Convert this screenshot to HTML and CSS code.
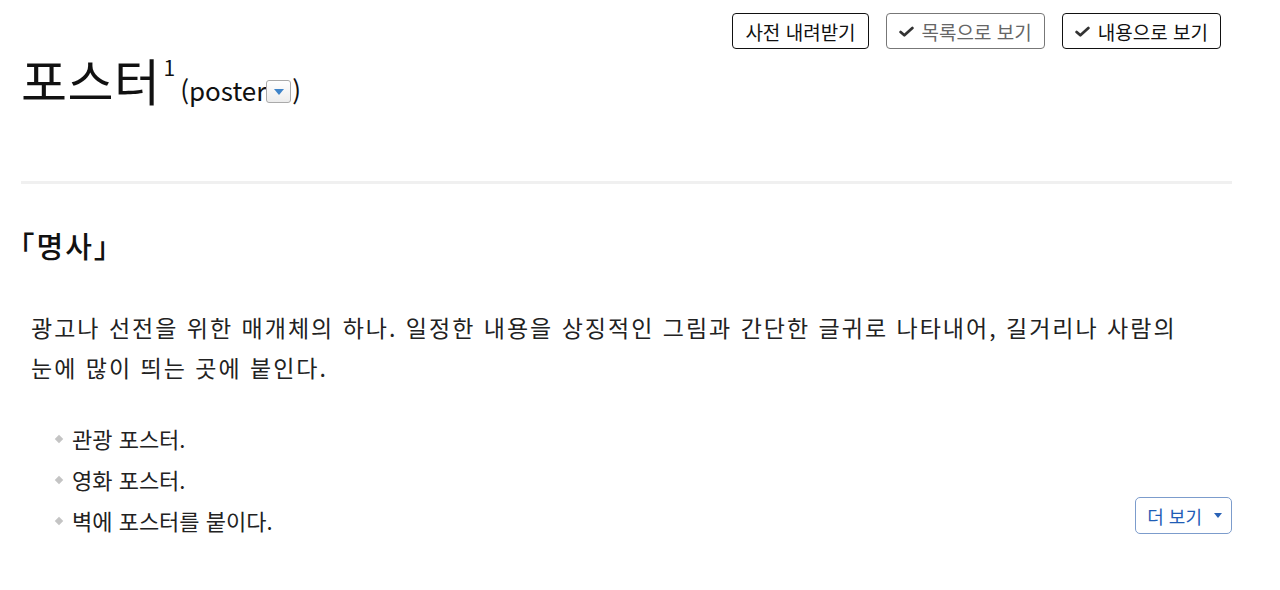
FILE: index.html
```html
<!DOCTYPE html>
<html lang="ko">
<head>
<meta charset="utf-8">
<link rel="stylesheet" href="styles.css">
</head>
<body>
<div class="page">
  <div class="toolbar">
    <button class="btn">사전 내려받기</button>
    <button class="btn btn-muted"><svg class="chk" viewBox="0 0 14 10" width="15" height="11"><path d="M1.5 5.5 L5 8.5 L12.5 1.8" fill="none" stroke="currentColor" stroke-width="2.6" stroke-linecap="round" stroke-linejoin="round"/></svg>목록으로 보기</button>
    <button class="btn"><svg class="chk" viewBox="0 0 14 10" width="15" height="11"><path d="M1.5 5.5 L5 8.5 L12.5 1.8" fill="none" stroke="currentColor" stroke-width="2.6" stroke-linecap="round" stroke-linejoin="round"/></svg>내용으로 보기</button>
  </div>
  <h1 class="headword"><span class="hw">포스터</span><sup class="hom">1</sup><span class="orig">(poster<span class="dd"><svg viewBox="0 0 12 8" width="12" height="8"><path d="M1 1 L11 1 L6 7 Z" fill="#3f84c9"/></svg></span>)</span></h1>
  <hr class="sep">
  <h2 class="pos">「명사」</h2>
  <p class="def">광고나 선전을 위한 매개체의 하나. 일정한 내용을 상징적인 그림과 간단한 글귀로 나타내어, 길거리나 사람의 눈에 많이 띄는 곳에 붙인다.</p>
  <div class="examples">
    <ul class="ex">
      <li>관광 포스터.</li>
      <li>영화 포스터.</li>
      <li>벽에 포스터를 붙이다.</li>
    </ul>
    <button class="more">더 보기<svg viewBox="0 0 8 5" width="8" height="5"><path d="M0 0 L8 0 L4 5 Z" fill="#2a62b6"/></svg></button>
  </div>
</div>
</body>
</html>
```
FILE: styles.css
```css
* { box-sizing: border-box; }
html, body { margin: 0; padding: 0; background: #fff; }
body {
  font-family: "Noto Sans CJK KR", "Noto Sans", sans-serif;
  color: #111;
}
.page {
  width: 1211px;
  margin-left: 21px;
}
.toolbar {
  display: flex;
  justify-content: flex-end;
  gap: 17px;
  padding-top: 13px;
  padding-right: 11px;
}
.btn {
  display: inline-flex;
  align-items: center;
  gap: 8px;
  height: 36px;
  padding: 0 12px;
  border: 1.5px solid #111;
  border-radius: 4px;
  background: #fff;
  font-family: inherit;
  font-size: 19px;
  color: #111;
  line-height: 1;
}
.btn-muted {
  border-color: #777;
  color: #666;
}
.btn-muted .chk { color: #a0a0a0; }
.btn .chk { color: #333; }
.headword {
  margin: 0;
  margin-top: -6px;
  display: flex;
  align-items: baseline;
  font-weight: 400;
  height: 74px;
}
.hw {
  font-size: 50px;
  letter-spacing: 0.5px;
  color: #111;
}
.hom {
  font-size: 21px;
  align-self: flex-start;
  margin-top: 9px;
  margin-left: 3px;
  margin-right: 5px;
}
.orig {
  font-size: 26px;
  color: #111;
  display: inline-flex;
  align-items: center;
}
.dd {
  display: inline-flex;
  align-items: center;
  justify-content: center;
  width: 25px;
  height: 23px;
  border: 1px solid #aaa;
  border-radius: 3px;
  background: linear-gradient(#fff, #ececec);
  margin: 4px 1px 0 0;
}
.sep {
  border: 0;
  height: 3px;
  background: #f0f0f0;
  margin: 64px 0 0 0;
}
.pos {
  margin: 40px 0 0 -1px;
  font-size: 29px;
  font-weight: 500;
  letter-spacing: 2px;
  color: #111;
  font-feature-settings: "halt";
}
.def {
  margin: 41px 0 0 10px;
  font-size: 23px;
  line-height: 40px;
  letter-spacing: 2px;
  word-spacing: 0;
  color: #222;
  width: 1165px;
  word-break: keep-all;
}
.examples {
  display: flex;
  justify-content: space-between;
  align-items: flex-end;
  margin-top: 31px;
}
.ex {
  list-style: none;
  margin: 0;
  padding: 0 0 0 33px;
}
.ex li {
  position: relative;
  padding-left: 18px;
  font-size: 22px;
  line-height: 41px;
  color: #222;
}
.ex li::before {
  content: "";
  position: absolute;
  left: 2px;
  top: 18px;
  width: 6px;
  height: 6px;
  background: #c4c4c4;
  transform: rotate(45deg);
}
.more {
  display: inline-flex;
  align-items: center;
  gap: 12px;
  height: 37px;
  padding: 0 9px 0 11px;
  margin-bottom: 7px;
  border: 1px solid #7c9ccc;
  border-radius: 5px;
  background: #fff;
  color: #1f5db6;
  font-family: inherit;
  font-size: 18px;
}
```
